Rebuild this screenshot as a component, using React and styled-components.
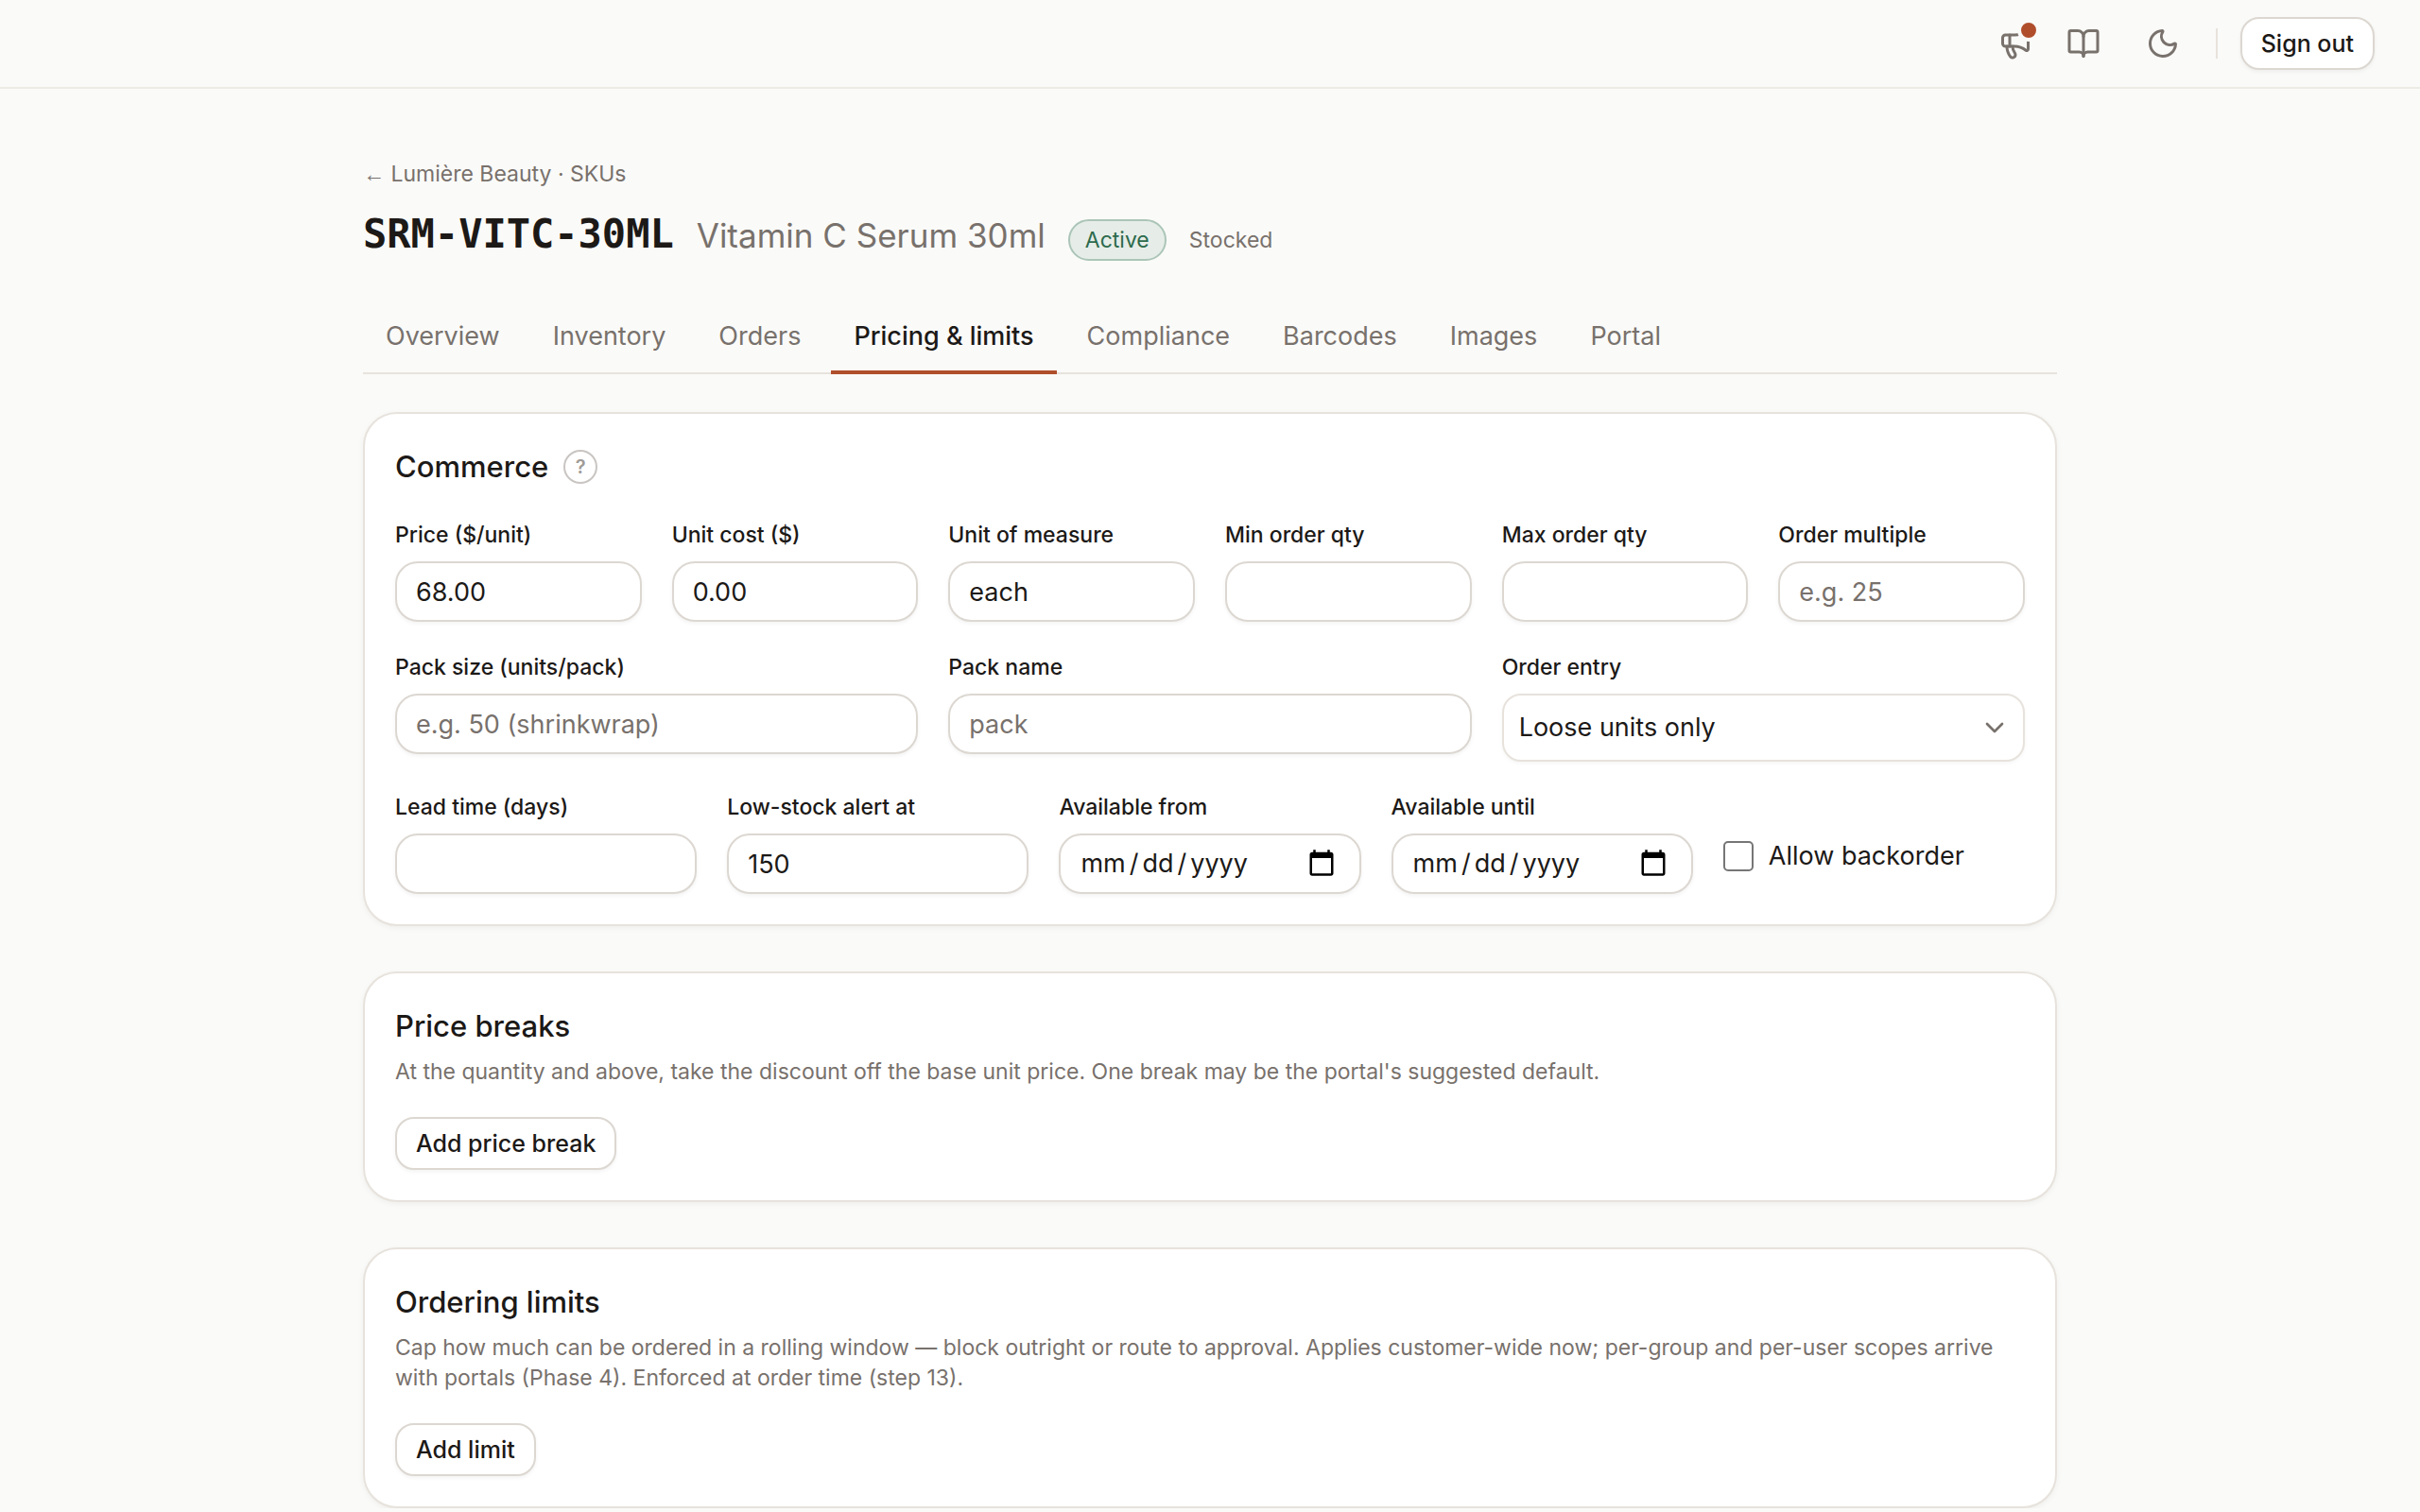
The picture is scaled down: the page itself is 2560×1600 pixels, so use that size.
import React, { useState } from 'react';
import styled, { createGlobalStyle } from 'styled-components';
import { BookOpen, ChevronDown, Megaphone, Moon } from 'lucide-react';

const GlobalStyle = createGlobalStyle`
  *, *::before, *::after {
    box-sizing: border-box;
  }
  body {
    margin: 0;
    background: #fafaf8;
    color: #1c1917;
    font-family: Inter, "Liberation Sans", sans-serif;
    font-size: 27px;
    line-height: 40px;
    -webkit-font-smoothing: antialiased;
  }
  button, input, select {
    font: inherit;
    color: inherit;
    margin: 0;
  }
`;

// Top bar
const TopBar = styled.header`
  display: flex;
  align-items: center;
  justify-content: flex-end;
  padding: 18px 48px;
  border-bottom: 2px solid #ecebe5;
`;

const IconButton = styled.button`
  position: relative;
  display: flex;
  align-items: center;
  justify-content: center;
  width: ${(props) => (props.$wide ? '96px' : '72px')};
  height: 56px;
  padding: 0;
  border: 0;
  background: none;
  color: #78716c;
  margin-right: ${(props) => (props.$wide ? '8px' : '0')};
`;

const Dot = styled.span`
  position: absolute;
  top: 2px;
  right: 10px;
  width: 24px;
  height: 24px;
  border: 4px solid #fafaf8;
  border-radius: 50%;
  background: #b04e2c;
`;

const Divider = styled.span`
  width: 2px;
  height: 32px;
  margin-right: 24px;
  background: #e7e2dc;
`;

const Button = styled.button`
  height: 56px;
  padding: 0 20px;
  border: 2px solid #dcd7d1;
  border-radius: 20px;
  background: #fff;
  box-shadow: 0 2px 4px rgba(28, 25, 23, 0.05);
  font-size: 25px;
  font-weight: 500;
  line-height: 40px;
`;

// Page
const Main = styled.main`
  max-width: 1888px;
  margin: 0 auto;
  padding: 74px 48px 0;
`;

const BackLink = styled.a`
  display: block;
  width: fit-content;
  color: #78716c;
  font-size: 23px;
  line-height: 32px;
  text-decoration: none;
`;

const Arrow = styled.span`
  font-family: "Liberation Sans", sans-serif;
`;

const TitleRow = styled.div`
  display: flex;
  align-items: baseline;
  gap: 24px;
  margin-top: 16px;
`;

const Sku = styled.h1`
  margin: 0;
  font-family: "DejaVu Sans Mono", "Liberation Mono", monospace;
  font-size: 42px;
  font-weight: 700;
  line-height: 64px;
`;

const ProductName = styled.span`
  color: #78716c;
  font-size: 35px;
`;

const Badge = styled.span`
  padding: 4px 16px;
  border: 2px solid #abc5b8;
  border-radius: 22px;
  background: #e6ede8;
  color: #2c6a4c;
  font-size: 23px;
  line-height: 32px;
`;

const StockNote = styled.span`
  color: #78716c;
  font-size: 23px;
`;

const Tabs = styled.nav`
  display: flex;
  gap: 8px;
  margin: 40px 0;
  border-bottom: 2px solid #e7e2dc;
`;

const Tab = styled.a`
  margin-bottom: -2px;
  padding: 16px 24px;
  border-bottom: 4px solid ${(props) => (props.$active ? '#b04e2c' : 'transparent')};
  color: ${(props) => (props.$active ? '#1c1917' : '#78716c')};
  font-weight: ${(props) => (props.$active ? 500 : 400)};
  text-decoration: none;
`;

const Cards = styled.div`
  display: grid;
  gap: 48px;
`;

const Card = styled.section`
  padding: 32px;
  border: 2px solid #e7e2dc;
  border-radius: 36px;
  background: #fff;
  box-shadow: 0 2px 6px rgba(28, 25, 23, 0.05);
`;

const CardHead = styled.div`
  display: flex;
  align-items: center;
  gap: 16px;
`;

const CardTitle = styled.h2`
  margin: 0;
  font-size: 31px;
  font-weight: 500;
  line-height: 48px;
`;

const Help = styled.button`
  width: 36px;
  height: 36px;
  padding: 0;
  border: 2px solid #c9c5c2;
  border-radius: 50%;
  background: none;
  color: #a09b97;
  font-size: 20px;
  font-weight: 600;
  line-height: 32px;
`;

const CardText = styled.p`
  margin: 8px 0 32px;
  color: #78716c;
  font-size: 23px;
  line-height: 32px;
`;

const FieldRow = styled.div`
  display: grid;
  grid-template-columns: repeat(${(props) => props.$columns}, minmax(0, 1fr));
  gap: 32px;
  align-items: start;
  margin-top: 32px;
`;

const FieldBox = styled.div`
  display: grid;
  gap: 12px;
`;

const Label = styled.label`
  font-size: 23px;
  font-weight: 500;
  line-height: 32px;
`;

const Input = styled.input`
  width: 100%;
  height: 64px;
  padding: 0 20px;
  border: 2px solid #dcd7d1;
  border-radius: 24px;
  background: #fff;
  box-shadow: 0 2px 4px rgba(28, 25, 23, 0.05);

  &::placeholder {
    color: #78716c;
    opacity: 1;
  }
  &::-webkit-datetime-edit-text {
    padding: 0 3px;
  }
  &::-webkit-calendar-picker-indicator {
    width: 32px;
    height: 32px;
    padding: 4px;
  }
`;

const SelectWrap = styled.div`
  position: relative;

  svg {
    position: absolute;
    top: 20px;
    right: 16px;
    color: #78716c;
    pointer-events: none;
  }
`;

const Select = styled.select`
  appearance: none;
  display: block;
  width: 100%;
  height: 72px;
  padding: 0 56px 0 16px;
  border: 2px solid #e7e2dc;
  border-radius: 20px;
  background: #fff;
  box-shadow: 0 2px 4px rgba(28, 25, 23, 0.04);
`;

const CheckLabel = styled.label`
  display: flex;
  align-items: center;
  align-self: end;
  gap: 16px;
  padding-bottom: 16px;
  line-height: 48px;
`;

const Checkbox = styled.input`
  appearance: none;
  width: 32px;
  height: 32px;
  border: 2px solid #767676;
  border-radius: 5px;
  background: #fff;

  &:checked {
    background: #b04e2c;
    border-color: #b04e2c;
  }
`;

const tabs = [
  'Overview',
  'Inventory',
  'Orders',
  'Pricing & limits',
  'Compliance',
  'Barcodes',
  'Images',
  'Portal',
];

const Field = ({ id, label, ...rest }) => (
  <FieldBox>
    <Label htmlFor={id}>{label}</Label>
    <Input id={id} {...rest} />
  </FieldBox>
);

const App = () => {
  const [activeTab, setActiveTab] = useState('Pricing & limits');

  return (
    <>
      <GlobalStyle />
      <TopBar>
        <IconButton type="button" aria-label="What's new">
          <Megaphone size={36} strokeWidth={2} />
          <Dot />
        </IconButton>
        <IconButton type="button" aria-label="Docs">
          <BookOpen size={36} strokeWidth={2} />
        </IconButton>
        <IconButton type="button" aria-label="Dark mode" $wide>
          <Moon size={36} strokeWidth={2} />
        </IconButton>
        <Divider />
        <Button type="button">Sign out</Button>
      </TopBar>

      <Main>
        <BackLink href="#skus">
          <Arrow>←</Arrow> Lumière Beauty · SKUs
        </BackLink>
        <TitleRow>
          <Sku>SRM-VITC-30ML</Sku>
          <ProductName>Vitamin C Serum 30ml</ProductName>
          <Badge>Active</Badge>
          <StockNote>Stocked</StockNote>
        </TitleRow>

        <Tabs>
          {tabs.map((tab) => (
            <Tab
              key={tab}
              href="#tab"
              $active={tab === activeTab}
              onClick={() => setActiveTab(tab)}
            >
              {tab}
            </Tab>
          ))}
        </Tabs>

        <Cards>
          <Card>
            <CardHead>
              <CardTitle>Commerce</CardTitle>
              <Help type="button">?</Help>
            </CardHead>
            <FieldRow $columns={6}>
              <Field id="price" label="Price ($/unit)" defaultValue="68.00" />
              <Field id="cost" label="Unit cost ($)" defaultValue="0.00" />
              <Field id="uom" label="Unit of measure" defaultValue="each" />
              <Field id="min" label="Min order qty" />
              <Field id="max" label="Max order qty" />
              <Field id="multiple" label="Order multiple" placeholder="e.g. 25" />
            </FieldRow>
            <FieldRow $columns={3}>
              <Field id="packSize" label="Pack size (units/pack)" placeholder="e.g. 50 (shrinkwrap)" />
              <Field id="packName" label="Pack name" placeholder="pack" />
              <FieldBox>
                <Label htmlFor="entry">Order entry</Label>
                <SelectWrap>
                  <Select id="entry">
                    <option>Loose units only</option>
                  </Select>
                  <ChevronDown size={32} strokeWidth={2} />
                </SelectWrap>
              </FieldBox>
            </FieldRow>
            <FieldRow $columns={5}>
              <Field id="lead" label="Lead time (days)" />
              <Field id="lowStock" label="Low-stock alert at" defaultValue="150" />
              <Field id="from" label="Available from" type="date" />
              <Field id="until" label="Available until" type="date" />
              <CheckLabel>
                <Checkbox type="checkbox" />
                Allow backorder
              </CheckLabel>
            </FieldRow>
          </Card>

          <Card>
            <CardTitle>Price breaks</CardTitle>
            <CardText>
              At the quantity and above, take the discount off the base unit price. One break may be
              the portal's suggested default.
            </CardText>
            <Button type="button">Add price break</Button>
          </Card>

          <Card>
            <CardTitle>Ordering limits</CardTitle>
            <CardText>
              Cap how much can be ordered in a rolling window — block outright or route to approval.
              Applies customer-wide now; per-group and per-user scopes arrive with portals (Phase 4).
              Enforced at order time (step 13).
            </CardText>
            <Button type="button">Add limit</Button>
          </Card>
        </Cards>
      </Main>
    </>
  );
};

export default App;
